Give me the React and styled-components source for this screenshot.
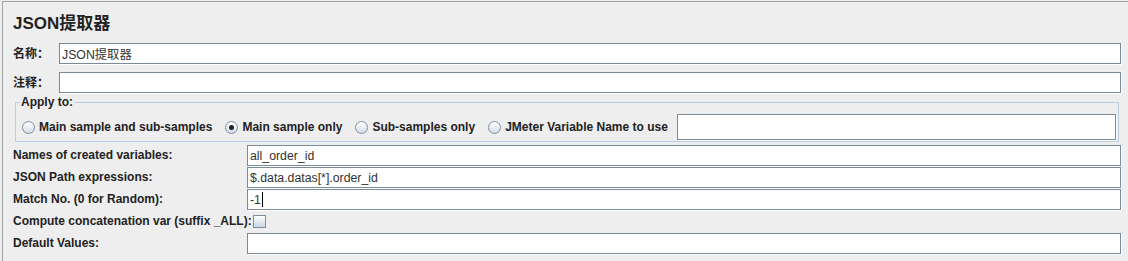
import React from 'react'
import styled, { createGlobalStyle } from 'styled-components'

const GlobalStyle = createGlobalStyle`
  html, body {
    margin: 0;
    padding: 0;
    background: #eeeeee;
  }
  body {
    font-family: "Liberation Sans", Arial, "Noto Sans CJK SC", sans-serif;
    font-size: 12px;
    color: #222;
  }
`

const Panel = styled.div`
  margin: 1px 0 0 2px;
  height: 260px;
  box-sizing: border-box;
  border-top: 1px solid #9ea3a8;
  border-left: 1px solid #9ea3a8;
  padding: 0 7px 0 10px;
`

const Title = styled.div`
  height: 40px;
  padding-top: 4px;
  box-sizing: border-box;
  line-height: 36px;
  font-size: 17px;
  font-weight: bold;
  color: #222;
`

const Row = styled.div`
  display: flex;
  align-items: center;
  height: 21px;
  margin-top: ${p => p.$gap || 0}px;
`

const Label = styled.div`
  flex: 0 0 ${p => p.$width ? p.$width + 'px' : 'auto'};
  font-weight: bold;
  white-space: nowrap;
  color: #222;
  margin-top: -2px;
`

const Field = styled.div`
  flex: 1;
  align-self: stretch;
  display: flex;
  align-items: center;
  box-sizing: border-box;
  height: ${p => p.$height || 21}px;
  background: #fff;
  border: 1px solid #7a8a99;
  box-shadow: 1px 1px 0 #fff;
  padding-left: 2px;
  font-size: 12.3px;
  color: #333;
  white-space: nowrap;
`

const Caret = styled.span`
  display: inline-block;
  width: 1px;
  height: 15px;
  background: #000;
  margin-left: 1px;
`

const Group = styled.fieldset`
  margin: 2px 2px 0 2px;
  padding: 5px 2px 1px 6px;
  border: 1px solid #b8cfe5;
`

const Legend = styled.legend`
  margin-left: -2px;
  padding: 0 1px;
  line-height: 14px;
  font-weight: bold;
  color: #222;
`

const Options = styled.div`
  display: flex;
  align-items: center;
  height: 26px;
`

const Option = styled.label`
  display: flex;
  align-items: center;
  font-weight: bold;
  white-space: nowrap;
  margin-right: ${p => p.$last ? 9 : 13}px;
  color: #222;
`

const Radio = styled.span`
  position: relative;
  width: 13px;
  height: 13px;
  box-sizing: border-box;
  border-radius: 50%;
  border: 1px solid #7f8ea0;
  background: linear-gradient(#ffffff, #d4dde8);
  margin-right: 4px;
  flex: 0 0 auto;

  &::after {
    content: '';
    display: ${p => p.$checked ? 'block' : 'none'};
    position: absolute;
    left: 3px;
    top: 3px;
    width: 5px;
    height: 5px;
    border-radius: 50%;
    background: #222;
  }
`

const Check = styled.span`
  width: 13px;
  height: 13px;
  box-sizing: border-box;
  border: 1px solid #7f8ea0;
  background: linear-gradient(#ffffff, #c9d6e4);
  margin-left: 1px;
  flex: 0 0 auto;
`

const Settings = styled.div`
  display: flex;
  flex-direction: column;
  gap: 1px;
  margin-top: 3px;
`

export default function App() {
  const options = [
    { text: 'Main sample and sub-samples' },
    { text: 'Main sample only', checked: true },
    { text: 'Sub-samples only' },
    { text: 'JMeter Variable Name to use', last: true },
  ]

  return (
    <>
      <GlobalStyle />
      <Panel>
        <Title>JSON提取器</Title>
        <Row $gap={1}>
          <Label $width={46}>名称：</Label>
          <Field>JSON提取器</Field>
        </Row>
        <Row $gap={8}>
          <Label $width={46}>注释：</Label>
          <Field />
        </Row>
        <Group>
          <Legend>Apply to:</Legend>
          <Options>
            {options.map(o => (
              <Option key={o.text} $last={o.last}>
                <Radio $checked={o.checked} />
                {o.text}
              </Option>
            ))}
            <Field $height={26} />
          </Options>
        </Group>
        <Settings>
          <Row>
            <Label $width={234}>Names of created variables:</Label>
            <Field>all_order_id</Field>
          </Row>
          <Row>
            <Label $width={234}>JSON Path expressions:</Label>
            <Field>$.data.datas[*].order_id</Field>
          </Row>
          <Row>
            <Label $width={234}>Match No. (0 for Random):</Label>
            <Field>-1<Caret /></Field>
          </Row>
          <Row>
            <Label>Compute concatenation var (suffix _ALL):</Label>
            <Check />
          </Row>
          <Row>
            <Label $width={234}>Default Values:</Label>
            <Field />
          </Row>
        </Settings>
      </Panel>
    </>
  )
}
